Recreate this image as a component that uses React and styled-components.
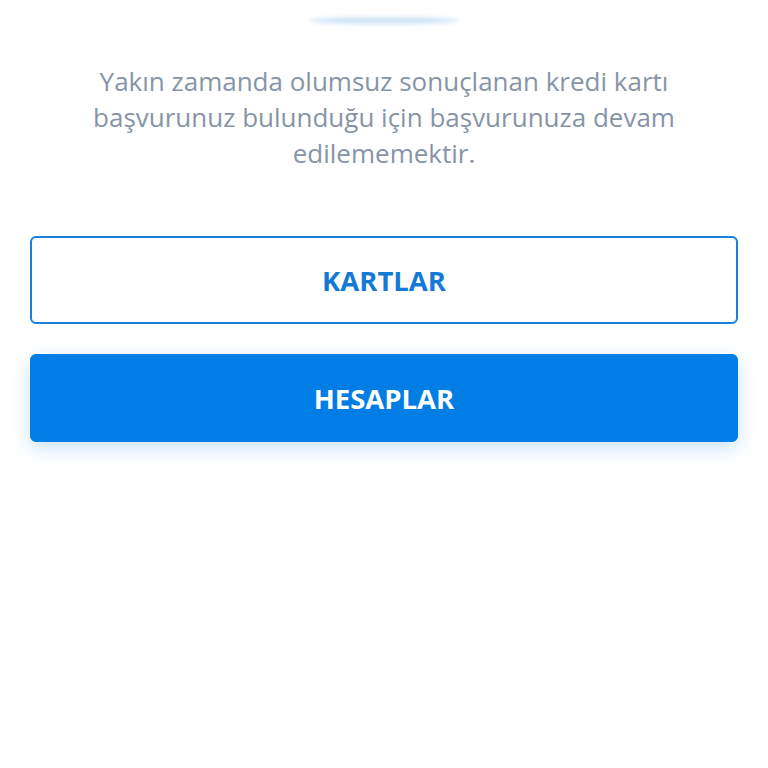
import styled, { createGlobalStyle } from "styled-components";

const Global = createGlobalStyle`
    html, body {
        margin: 0;
        padding: 0;
        background: #FFFFFF;
    }
    * {
        box-sizing: border-box;
    }
`;

export default function App() {
    return (
        <Page>
            <Global />
            <Glow />
            <Message>
                Yakın zamanda olumsuz sonuçlanan kredi kartı başvurunuz bulunduğu için başvurunuza devam edilememektir.
            </Message>
            <Actions>
                <Button variant="outline">KARTLAR</Button>
                <Button variant="filled">HESAPLAR</Button>
            </Actions>
        </Page>
    );
}

const Page = styled.div`
    width: 768px;
    height: 768px;
    display: flex;
    flex-direction: column;
    align-items: center;
    padding: 17px 30px 0 30px;
    font-family: "Open Sans", "Noto Sans", sans-serif;
    overflow: hidden;
`;

const Glow = styled.div`
    width: 150px;
    height: 7px;
    border-radius: 50%;
    background: #cfe3f7;
    filter: blur(2px);
`;

const Message = styled.p`
    margin: 39px 0 0 0;
    width: 620px;
    font-size: 26px;
    line-height: 36px;
    font-weight: 400;
    text-align: center;
    color: #8794a7;
`;

const Actions = styled.div`
    width: 100%;
    margin-top: 65px;
    display: flex;
    flex-direction: column;
    gap: 30px;
`;

const Button = styled.button`
    width: 100%;
    height: 88px;
    border-radius: 6px;
    font-family: "Open Sans", "Noto Sans", sans-serif;
    font-weight: 700;
    font-size: 27.5px;
    cursor: pointer;
    border: 2px solid ${p => (p.variant === "filled" ? "#007ee5" : "#1a7fdb")};
    background: ${p => (p.variant === "filled" ? "#007ee5" : "#FFFFFF")};
    color: ${p => (p.variant === "filled" ? "#FFFFFF" : "#1579d6")};
    box-shadow: ${p => (p.variant === "filled" ? "0 6px 18px rgba(0, 126, 229, 0.22)" : "none")};
`;
